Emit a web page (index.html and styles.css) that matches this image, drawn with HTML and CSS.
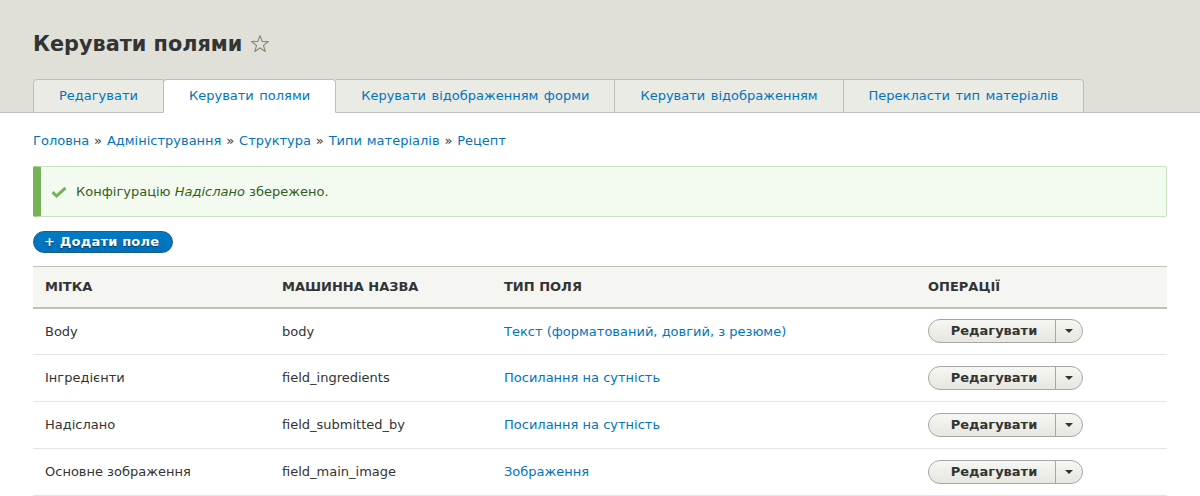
FILE: index.html
```html
<!DOCTYPE html>
<html lang="uk">
<head>
<meta charset="utf-8">
<title>Керувати полями</title>
<link rel="stylesheet" href="styles.css">
</head>
<body>
<header class="region-header">
  <div class="title-row">
    <h1 class="page-title">Керувати полями</h1>
    <svg class="star" width="20" height="20" viewBox="0 0 20 20"><path d="M10 1.6 L12.2 7.4 L18.4 7.6 L13.5 11.4 L15.2 17.4 L10 13.9 L4.8 17.4 L6.5 11.4 L1.6 7.6 L7.8 7.4 Z" fill="none" stroke="#8a8a74" stroke-width="1.2" stroke-linejoin="round"/></svg>
  </div>
  <nav class="tabs">
    <a class="tab">Редагувати</a>
    <a class="tab is-active">Керувати полями</a>
    <a class="tab">Керувати відображенням форми</a>
    <a class="tab">Керувати відображенням</a>
    <a class="tab">Перекласти тип матеріалів</a>
  </nav>
</header>
<main class="content">
  <nav class="breadcrumb">
    <a>Головна</a> » <a>Адміністрування</a> » <a>Структура</a> » <a>Типи матеріалів</a> » <a>Рецепт</a>
  </nav>
  <div class="message">
    <svg class="check" width="16" height="12" viewBox="0 0 16 12"><path d="M1.5 6.2 L5.6 10 L14.5 1.8" fill="none" stroke="#73b355" stroke-width="3"/></svg>
    <span>Конфігурацію <em>Надіслано</em> збережено.</span>
  </div>
  <div class="actions">
    <a class="button-primary">+ Додати поле</a>
  </div>
  <table class="fields">
    <thead>
      <tr><th class="c1">Мітка</th><th class="c2">Машинна назва</th><th class="c3">Тип поля</th><th class="c4">Операції</th></tr>
    </thead>
    <tbody>
      <tr><td>Body</td><td>body</td><td><a>Текст (форматований, довгий, з резюме)</a></td><td><div class="dropbutton"><span class="db-main">Редагувати</span><span class="db-toggle"></span></div></td></tr>
      <tr><td>Інгредієнти</td><td>field_ingredients</td><td><a>Посилання на сутність</a></td><td><div class="dropbutton"><span class="db-main">Редагувати</span><span class="db-toggle"></span></div></td></tr>
      <tr><td>Надіслано</td><td>field_submitted_by</td><td><a>Посилання на сутність</a></td><td><div class="dropbutton"><span class="db-main">Редагувати</span><span class="db-toggle"></span></div></td></tr>
      <tr><td>Основне зображення</td><td>field_main_image</td><td><a>Зображення</a></td><td><div class="dropbutton"><span class="db-main">Редагувати</span><span class="db-toggle"></span></div></td></tr>
    </tbody>
  </table>
</main>
</body>
</html>
```

FILE: styles.css
```css
* { box-sizing: border-box; }
html, body { margin: 0; padding: 0; }
body {
  font-family: "DejaVu Sans", "Liberation Sans", sans-serif;
  font-size: 13px;
  line-height: 1.5;
  color: #222330;
  background: #fff;
}
a { color: #0074bd; text-decoration: none; cursor: pointer; }

.region-header {
  background: #e0e0d8;
  padding: 0 33px;
  border-bottom: 1px solid #bfbfba;
}
.title-row {
  display: flex;
  align-items: center;
  gap: 8px;
  height: 79px;
  padding-top: 10px;
}
.page-title {
  margin: 0;
  font-size: 20.8px;
  font-weight: bold;
  color: #333;
  line-height: 1.2;
}
.star { margin-top: -1px; }

.tabs {
  display: flex;
  margin-bottom: -1px;
}
.tab {
  display: block;
  height: 34px;
  line-height: 32px;
  padding: 0 25px;
  background: #ebebe5;
  border: 1px solid #bfbfba;
  border-left-width: 0;
  color: #0074bd;
  word-spacing: 1.4px;
}
.tab:first-child { border-left-width: 1px; border-top-left-radius: 4px; }
.tab:last-child { border-top-right-radius: 4px; }
.tab.is-active {
  background: #fff;
  border-bottom-color: #fff;
  border-radius: 4px 4px 0 0;
  border-left-width: 1px;
  margin-left: -1px;
}

.content { padding: 0 33px; }
.breadcrumb {
  padding-top: 18px;
  line-height: 20px;
  color: #333;
  word-spacing: 0.7px;
}

.message {
  margin-top: 15px;
  height: 51px;
  display: flex;
  align-items: center;
  gap: 9px;
  padding-left: 10px;
  background: #f3faef;
  border: 1px solid #c9e1bd;
  border-left: 8px solid #77b259;
  border-radius: 2px;
  color: #325e1c;
}
.check { flex: none; margin-top: 1px; }

.actions { margin-top: 14px; display: flex; }
.button-primary {
  display: inline-block;
  height: 22px;
  line-height: 20px;
  padding: 0 13px 0 10px;
  border: 1px solid #1e5c90;
  border-radius: 20px;
  background: linear-gradient(to bottom, #007bc6, #0071b8);
  color: #fff;
  font-weight: bold;
  text-shadow: 0 1px 1px rgba(0,0,0,0.5);
  letter-spacing: 0.2px;
}

.fields {
  margin-top: 13px;
  width: 100%;
  border-collapse: collapse;
}
.fields th {
  text-align: left;
  text-transform: uppercase;
  font-weight: bold;
  color: #333;
  background: #f5f5f2;
  border-top: 1px solid #bfbfba;
  border-bottom: 2px solid #bfbfba;
  height: 41px;
  padding: 0 12px;
}
.fields td {
  height: 47px;
  padding: 0 12px;
  border-bottom: 1px solid #e6e4df;
  color: #333;
}
.c1 { width: 237px; }
.c2 { width: 222px; }
.c3 { width: 424px; }

.dropbutton {
  display: inline-flex;
  height: 24px;
  width: 155px;
  border: 1px solid #a6a6a6;
  border-radius: 12px;
  background: linear-gradient(to bottom, #f6f6f3, #e7e7df);
  align-items: stretch;
}
.db-main {
  flex: 1;
  text-align: center;
  font-weight: bold;
  color: #333;
  line-height: 22px;
  padding-left: 4px;
}
.db-toggle {
  width: 27px;
  border-left: 1px solid #a6a6a6;
  position: relative;
}
.db-toggle::after {
  content: "";
  position: absolute;
  left: 9px;
  top: 9px;
  border-left: 4px solid transparent;
  border-right: 4px solid transparent;
  border-top: 4px solid #333;
}
```
